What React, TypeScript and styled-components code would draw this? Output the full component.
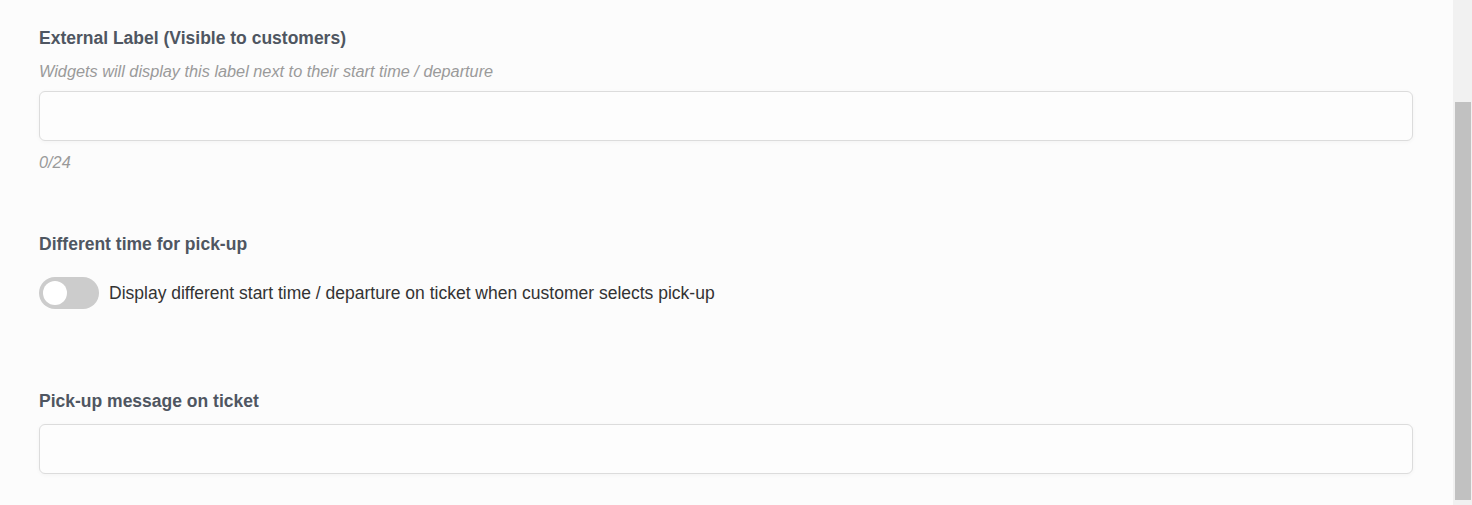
import React, { useState } from 'react';
import styled, { createGlobalStyle } from 'styled-components';

const GlobalStyle = createGlobalStyle`
  html, body {
    margin: 0;
    padding: 0;
    background: #fcfcfc;
    font-family: "Liberation Sans", Arial, sans-serif;
    overflow: hidden;
  }
`;

const Page = styled.div`
  display: flex;
  width: 1472px;
  height: 505px;
  background: #fcfcfc;
`;

const Content = styled.div`
  flex: 1;
  display: flex;
  flex-direction: column;
  padding: 28px 40px 0 39px;
`;

const Label = styled.div<{ $gap?: number }>`
  font-size: 17.5px;
  line-height: 20px;
  font-weight: bold;
  color: #4f5661;
  margin-top: ${({ $gap }) => $gap ?? 0}px;
`;

const Hint = styled.div`
  font-size: 16.3px;
  line-height: 20px;
  font-style: italic;
  color: #9a9a9a;
  margin-top: 13px;
`;

const TextInput = styled.input<{ $gap: number }>`
  box-sizing: border-box;
  width: 100%;
  height: 50px;
  margin-top: ${({ $gap }) => $gap}px;
  border: 1px solid #dcdcdc;
  border-radius: 6px;
  background: #fdfdfd;
  box-shadow: 0 1px 4px rgba(0, 0, 0, 0.04);
  padding: 0 14px;
  font-size: 16px;
  font-family: inherit;
  outline: none;
`;

const Counter = styled.div`
  font-size: 16.3px;
  line-height: 20px;
  font-style: italic;
  color: #9a9a9a;
  margin-top: 11px;
`;

const ToggleRow = styled.label`
  display: flex;
  align-items: center;
  gap: 10px;
  margin-top: 23px;
  cursor: pointer;
`;

const Track = styled.span<{ $on: boolean }>`
  position: relative;
  width: 60px;
  height: 32px;
  border-radius: 16px;
  background: ${({ $on }) => ($on ? '#4a90e2' : '#cccccc')};
  flex-shrink: 0;
`;

const Knob = styled.span<{ $on: boolean }>`
  position: absolute;
  top: 4px;
  left: ${({ $on }) => ($on ? '32px' : '4px')};
  width: 24px;
  height: 24px;
  border-radius: 50%;
  background: #ffffff;
`;

const ToggleText = styled.span`
  font-size: 17.5px;
  line-height: 20px;
  color: #333333;
`;

const ScrollTrack = styled.div`
  width: 19px;
  height: 505px;
  background: #f1f1f1;
  display: flex;
  flex-direction: column;
  padding: 102px 1px 5px 2px;
  box-sizing: border-box;
`;

const ScrollThumb = styled.div`
  flex: 1;
  background: #c1c1c1;
`;

const App: React.FC = () => {
  const [label, setLabel] = useState('');
  const [on, setOn] = useState(false);
  const [message, setMessage] = useState('');

  return (
    <Page>
      <GlobalStyle />
      <Content>
        <Label>External Label (Visible to customers)</Label>
        <Hint>Widgets will display this label next to their start time / departure</Hint>
        <TextInput
          $gap={10}
          value={label}
          maxLength={24}
          onChange={(e) => setLabel(e.target.value)}
        />
        <Counter>{label.length}/24</Counter>

        <Label $gap={62}>Different time for pick-up</Label>
        <ToggleRow onClick={() => setOn(!on)}>
          <Track $on={on}>
            <Knob $on={on} />
          </Track>
          <ToggleText>
            Display different start time / departure on ticket when customer selects pick-up
          </ToggleText>
        </ToggleRow>

        <Label $gap={82}>Pick-up message on ticket</Label>
        <TextInput
          $gap={13}
          value={message}
          onChange={(e) => setMessage(e.target.value)}
        />
      </Content>
      <ScrollTrack>
        <ScrollThumb />
      </ScrollTrack>
    </Page>
  );
};

export default App;
